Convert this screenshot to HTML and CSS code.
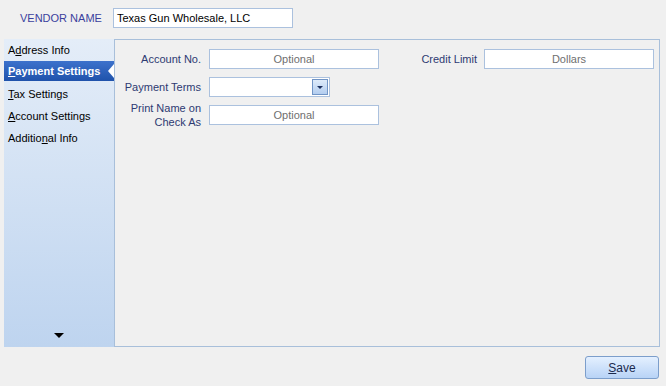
FILE: index.html
```html
<!DOCTYPE html>
<html>
<head>
<meta charset="utf-8">
<link rel="stylesheet" href="styles.css">
</head>
<body>
<div class="top">
  <span class="vendor-label">VENDOR NAME</span>
  <div class="field vendor-field">Texas Gun Wholesale, LLC</div>
</div>
<div class="main">
  <div class="sidebar">
    <div class="item">A<u>d</u>dress Info</div>
    <div class="item selected"><u>P</u>ayment Settings</div>
    <div class="item"><u>T</u>ax Settings</div>
    <div class="item"><u>A</u>ccount Settings</div>
    <div class="item">Additio<u>n</u>al Info</div>
    <div class="more"></div>
  </div>
  <div class="panel">
    <div class="row">
      <div class="label">Account No.</div>
      <div class="field ph">Optional</div>
      <div class="label label2">Credit Limit</div>
      <div class="field ph">Dollars</div>
    </div>
    <div class="row">
      <div class="label">Payment Terms</div>
      <div class="field combo"><span class="combo-btn"></span></div>
    </div>
    <div class="row">
      <div class="label tall">Print Name on<br>Check As</div>
      <div class="field ph">Optional</div>
    </div>
  </div>
</div>
<div class="footer">
  <button class="save"><u>S</u>ave</button>
</div>
</body>
</html>
```
FILE: styles.css
```css
* { box-sizing: border-box; }
html, body { margin: 0; padding: 0; }
body {
  width: 666px;
  height: 386px;
  background: #f0f0f0;
  font-family: "Liberation Sans", Arial, sans-serif;
  font-size: 11px;
  color: #000;
  overflow: hidden;
}
.top {
  display: flex;
  align-items: center;
  height: 39px;
  padding: 0 0 3px 20px;
}
.vendor-label {
  width: 93px;
  color: #3b3f9e;
}
.field {
  height: 20px;
  background: #fff;
  border: 1px solid #abc1de;
  line-height: 18px;
  padding: 0 3px;
  white-space: nowrap;
}
.vendor-field { width: 180px; }
.main {
  display: flex;
  height: 308px;
  margin: 0 6px 0 4px;
}
.sidebar {
  width: 110px;
  display: flex;
  flex-direction: column;
  background: linear-gradient(to bottom, #e4edf8, #bed4ef);
}
.item {
  height: 22px;
  line-height: 22px;
  padding-left: 4px;
  white-space: nowrap;
}
.item u { text-decoration-thickness: 1px; text-underline-offset: 1px; }
.item.selected {
  position: relative;
  height: 20px;
  line-height: 20px;
  margin-bottom: 2px;
  color: #fff;
  font-weight: bold;
  background: linear-gradient(to bottom, #3d72cc, #1f52ab);
}
.item.selected::after {
  content: "";
  position: absolute;
  right: 0;
  top: 3px;
  border-style: solid;
  border-width: 7px 6px 7px 0;
  border-color: transparent #fff transparent transparent;
}
.more {
  margin: auto auto 9px;
  width: 0;
  height: 0;
  border-style: solid;
  border-width: 5px 5px 0 5px;
  border-color: #000 transparent transparent transparent;
}
.panel {
  flex: 1;
  border: 1px solid #a8bfda;
  padding: 9px 5px 0 0;
  display: flex;
  flex-direction: column;
  gap: 8px;
}
.row {
  display: flex;
  align-items: center;
  height: 20px;
}
.label {
  width: 86px;
  text-align: right;
  color: #2d3a72;
  line-height: 14px;
  margin-right: 8px;
}
.label.tall { margin-top: -4px; margin-bottom: -4px; }
.label2 { width: 98px; margin-right: 7px; }
.ph {
  width: 170px;
  text-align: center;
  color: #6f6f6f;
}
.combo {
  width: 121px;
  position: relative;
}
.combo-btn {
  position: absolute;
  right: 1px;
  top: 1px;
  width: 16px;
  height: 16px;
  border: 1px solid #7195c6;
  background: linear-gradient(to bottom, #deebfa, #b3cdef);
}
.combo-btn::after {
  content: "";
  position: absolute;
  left: 4px;
  top: 6px;
  border-style: solid;
  border-width: 3px 3px 0 3px;
  border-color: #1b2f5e transparent transparent transparent;
}
.footer {
  display: flex;
  justify-content: flex-end;
  padding: 9px 7px 0 0;
}
.save {
  width: 74px;
  height: 23px;
  border: 1px solid #7c9ecb;
  border-radius: 3px;
  background: linear-gradient(to bottom, #e4f0ff, #b8d3f6);
  font-family: "Liberation Sans", Arial, sans-serif;
  font-size: 12px;
  color: #1b2a4e;
  padding: 0;
}
```
